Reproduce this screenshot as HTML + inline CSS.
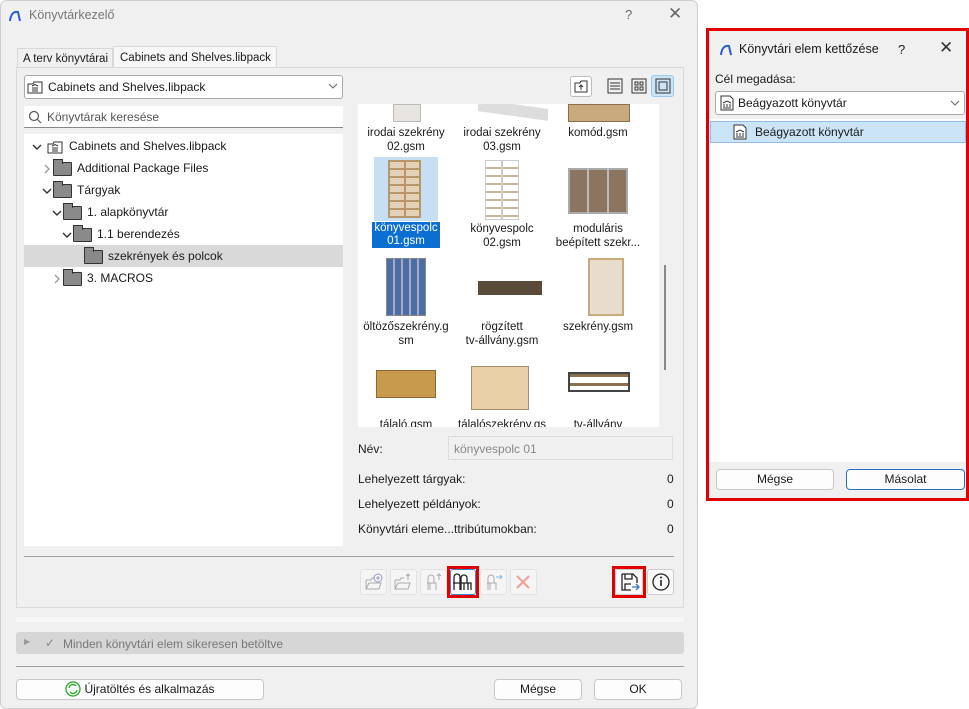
<!DOCTYPE html>
<html><head><meta charset="utf-8"><style>
*{box-sizing:border-box;margin:0;padding:0}
body{width:969px;height:709px;background:#fff;position:relative;overflow:hidden;font-family:"Liberation Sans",sans-serif;font-size:12px;color:#1a1a1a}
.a{position:absolute;white-space:nowrap}
.btn{position:absolute;background:#fdfdfd;border:1px solid #c8c8c8;border-radius:4px;text-align:center;line-height:19px}
.tb{position:absolute;width:27px;height:26px;border:1px solid #e2e2e2;border-radius:3px;background:#f5f5f5}
.fold{display:inline-block;width:19px;height:14px;background:#8a8a8a;border:1px solid #333;border-radius:1px;vertical-align:middle;position:relative;margin-right:5px}
.fold:before{content:"";position:absolute;left:-1px;top:-4px;width:8px;height:4px;background:#8a8a8a;border:1px solid #333;border-bottom:none}
.row{position:absolute;height:22px;line-height:22px;white-space:nowrap}
.chev{display:inline-block;width:12px;vertical-align:middle}
.lbl{position:absolute;width:96px;text-align:center;font-size:11.5px;line-height:14px;white-space:nowrap}
</style></head><body>
<svg width="0" height="0" style="position:absolute"><defs>
<symbol id="dn" viewBox="0 0 10 10"><path d="M1 3l4 4 4-4" fill="none" stroke="#333" stroke-width="1.4"/></symbol>
<symbol id="rt" viewBox="0 0 10 10"><path d="M3 1l4 4-4 4" fill="none" stroke="#999" stroke-width="1.3"/></symbol>
</defs></svg>

<div class="a" style="left:0;top:0;width:698px;height:709px;background:#f0f0f0;border:1px solid #cfcfcf;border-radius:6px"></div>
<svg class="a" style="left:8px;top:9px" width="14" height="14"><path d="M2 12 Q3 2 10 3 L12 12" fill="none" stroke="#2a5bd7" stroke-width="2"/></svg>
<div class="a" style="left:29px;top:8px;color:#777;font-size:12.5px">Könyvtárkezelő</div>
<div class="a" style="left:625px;top:7px;color:#666;font-size:13px">?</div>
<div class="a" style="left:668px;top:4px;color:#666;font-size:17px">✕</div>

<div class="a" style="left:17px;top:48px;width:96px;height:20px;border:1px solid #d8d8d8;border-bottom:none;background:#f0f0f0;padding:4px 5px;font-size:11.5px">A terv könyvtárai</div>
<div class="a" style="left:113px;top:46px;width:164px;height:22px;border:1px solid #d8d8d8;border-bottom:none;background:#f7f7f7;padding:5px 6px;font-size:11.5px">Cabinets and Shelves.libpack</div>
<div class="a" style="left:16px;top:67px;width:668px;height:541px;border:1px solid #dadada;background:#f0f0f0"></div>

<div class="a" style="left:24px;top:75px;width:319px;height:24px;border:1px solid #aaa;border-radius:3px;background:#fff"></div>
<svg class="a" style="left:27px;top:80px" width="16" height="14"><path d="M1 4h5l1-2h8v11H1z" fill="#fff" stroke="#333"/><path d="M5 6l3-1.5 3 1.5M5 11h6M6 7v3M8 7v3M10 7v3" stroke="#333" fill="none"/></svg>
<div class="a" style="left:48px;top:80px">Cabinets and Shelves.libpack</div>
<svg class="a" style="left:328px;top:83px" width="10" height="6"><path d="M1 1l4 4 4-4" fill="none" stroke="#666"/></svg>
<div class="a" style="left:24px;top:106px;width:319px;height:22px;background:#fff;border-bottom:1px solid #888"></div>
<svg class="a" style="left:28px;top:110px" width="14" height="14"><circle cx="6" cy="6" r="4.5" fill="none" stroke="#555" stroke-width="1.2"/><path d="M9.5 9.5l3.5 3.5" stroke="#555" stroke-width="1.2"/></svg>
<div class="a" style="left:47px;top:110px;color:#555">Könyvtárak keresése</div>
<div class="a" style="left:24px;top:134px;width:319px;height:412px;background:#fff"></div>
<div class="a" style="left:24px;top:245px;width:319px;height:22px;background:#d9d9d9"></div>
<div class="row" style="left:31px;top:135px"><svg class="chev" viewBox="0 0 10 10" height="10"><use href="#dn"/></svg><svg width="16" height="14" style="vertical-align:middle;margin:0 6px 0 4px"><path d="M1 4h5l1-2h8v11H1z" fill="#fff" stroke="#333"/><path d="M5 6l3-1.5 3 1.5M5 11h6M6 7v3M8 7v3M10 7v3" stroke="#333" fill="none"/></svg>Cabinets and Shelves.libpack</div>
<div class="row" style="left:41px;top:157px"><svg class="chev" viewBox="0 0 10 10" height="10"><use href="#rt"/></svg><span class="fold"></span>Additional Package Files</div>
<div class="row" style="left:41px;top:179px"><svg class="chev" viewBox="0 0 10 10" height="10"><use href="#dn"/></svg><span class="fold"></span>Tárgyak</div>
<div class="row" style="left:51px;top:201px"><svg class="chev" viewBox="0 0 10 10" height="10"><use href="#dn"/></svg><span class="fold"></span>1. alapkönyvtár</div>
<div class="row" style="left:61px;top:223px"><svg class="chev" viewBox="0 0 10 10" height="10"><use href="#dn"/></svg><span class="fold"></span>1.1 berendezés</div>
<div class="row" style="left:84px;top:245px"><span class="fold"></span>szekrények és polcok</div>
<div class="row" style="left:51px;top:267px"><svg class="chev" viewBox="0 0 10 10" height="10"><use href="#rt"/></svg><span class="fold"></span>3. MACROS</div>

<div class="a" style="left:570px;top:76px;width:22px;height:21px;border:1px solid #bbb;border-radius:3px;background:#fff"></div>
<svg class="a" style="left:574px;top:80px" width="14" height="13"><path d="M1 3h5l1-2h6v11H1z" fill="none" stroke="#333"/><path d="M7 10V5M5 7l2-2 2 2" stroke="#333" fill="none"/></svg>
<svg class="a" style="left:607px;top:78px" width="16" height="16"><rect x="1" y="1" width="14" height="14" fill="none" stroke="#333"/><path d="M3 5h10M3 8h10M3 11h10" stroke="#333"/></svg>
<svg class="a" style="left:631px;top:78px" width="16" height="16"><rect x="1" y="1" width="14" height="14" fill="none" stroke="#333"/><rect x="4" y="4" width="3" height="3" fill="none" stroke="#333"/><rect x="9" y="4" width="3" height="3" fill="none" stroke="#333"/><rect x="4" y="9" width="3" height="3" fill="none" stroke="#333"/><rect x="9" y="9" width="3" height="3" fill="none" stroke="#333"/></svg>
<div class="a" style="left:651px;top:75px;width:23px;height:22px;background:#cce4f7;border:1px solid #9cc8ee;border-radius:3px"></div>
<svg class="a" style="left:655px;top:78px" width="16" height="16"><rect x="1" y="1" width="14" height="14" fill="none" stroke="#333"/><rect x="4" y="4" width="8" height="8" fill="none" stroke="#333"/></svg>

<div class="a" style="left:358px;top:104px;width:301px;height:323px;background:#fff;overflow:hidden">
  <div class="a" style="left:35px;top:0;width:28px;height:18px;background:#e8e4e0;border:1px solid #bbb"></div>
  <div class="a" style="left:120px;top:0;width:70px;height:12px;background:#ddd;transform:skewY(8deg)"></div>
  <div class="a" style="left:210px;top:0;width:62px;height:18px;background:#c9a97e;border:1px solid #8a7050"></div>
  <div class="lbl" style="left:0;top:22px">irodai szekrény<br>02.gsm</div>
  <div class="lbl" style="left:96px;top:22px">irodai szekrény<br>03.gsm</div>
  <div class="lbl" style="left:192px;top:22px">komód.gsm</div>
  <div class="a" style="left:16px;top:53px;width:64px;height:64px;background:#c6dff3"></div>
  <div class="a" style="left:30px;top:56px;width:33px;height:58px;border:2px solid #b8956a;background:repeating-linear-gradient(#e4d2b8 0 6px,#b8956a 6px 8px)"></div>
  <div class="a" style="left:46px;top:56px;width:2px;height:58px;background:#b8956a"></div>
  <div class="a" style="left:14px;top:118px;width:68px;height:26px;background:#0a6fd1;color:#fff;font-size:11.5px;line-height:13px;text-align:center">könyvespolc<br>01.gsm</div>
  <div class="a" style="left:127px;top:56px;width:34px;height:60px;border:1px solid #ccc;background:repeating-linear-gradient(#fff 0 6px,#c8b59a 6px 8px)"></div>
  <div class="a" style="left:143px;top:56px;width:2px;height:60px;background:#ccc"></div>
  <div class="lbl" style="left:96px;top:118px">könyvespolc<br>02.gsm</div>
  <div class="a" style="left:210px;top:64px;width:60px;height:46px;background:#8c7560;border:2px solid #aaa"></div>
  <div class="a" style="left:229px;top:64px;width:2px;height:46px;background:#bbb"></div>
  <div class="a" style="left:249px;top:64px;width:2px;height:46px;background:#bbb"></div>
  <div class="lbl" style="left:192px;top:118px">moduláris<br>beépített szekr...</div>
  <div class="a" style="left:28px;top:154px;width:40px;height:58px;background:repeating-linear-gradient(90deg,#4a6fa8 0 6px,#aab 6px 8px);border:1px solid #888"></div>
  <div class="lbl" style="left:0;top:216px">öltözőszekrény.g<br>sm</div>
  <div class="a" style="left:120px;top:177px;width:64px;height:14px;background:#5a4a38"></div>
  <div class="lbl" style="left:96px;top:216px">rögzített<br>tv-állvány.gsm</div>
  <div class="a" style="left:230px;top:154px;width:36px;height:58px;background:#e8dccb;border:2px solid #c9a97e"></div>
  <div class="lbl" style="left:192px;top:216px">szekrény.gsm</div>
  <div class="a" style="left:18px;top:266px;width:60px;height:28px;background:#c89a4e;border:1px solid #8a6a30"></div>
  <div class="a" style="left:113px;top:262px;width:58px;height:44px;background:#e8cfa6;border:1px solid #a89070"></div>
  <div class="a" style="left:210px;top:268px;width:62px;height:20px;border:2px solid #444;background:repeating-linear-gradient(#8a7050 0 3px,transparent 3px 9px)"></div>
  <div class="lbl" style="left:0;top:314px">tálaló.gsm</div>
  <div class="lbl" style="left:96px;top:314px">tálalószekrény.gs</div>
  <div class="lbl" style="left:192px;top:314px">tv-állvány</div>
</div>
<div class="a" style="left:664px;top:265px;width:2px;height:105px;background:#888"></div>

<div class="a" style="left:358px;top:442px">Név:</div>
<div class="a" style="left:448px;top:436px;width:225px;height:24px;border:1px solid #ddd;background:#f0f0f0;padding:5px 5px;color:#888">könyvespolc 01</div>
<div class="a" style="left:358px;top:472px">Lehelyezett tárgyak:</div><div class="a" style="left:667px;top:472px">0</div>
<div class="a" style="left:358px;top:497px">Lehelyezett példányok:</div><div class="a" style="left:667px;top:497px">0</div>
<div class="a" style="left:358px;top:522px">Könyvtári eleme...ttribútumokban:</div><div class="a" style="left:667px;top:522px">0</div>

<div class="a" style="left:24px;top:556px;width:650px;height:1px;background:#a0a0a0"></div>

<div class="tb" style="left:360px;top:569px"></div>
<div class="tb" style="left:390px;top:569px"></div>
<div class="tb" style="left:420px;top:569px"></div>
<div class="tb" style="left:480px;top:569px"></div>
<div class="tb" style="left:510px;top:569px"></div>
<svg class="a" style="left:364px;top:572px" width="20" height="20"><path d="M2 8h5l1-2h3M2 8v9h13l2-6H5l-3 6" fill="none" stroke="#aaa"/><circle cx="14" cy="6" r="4" fill="none" stroke="#99c"/><path d="M14 4v4M12 6h4" stroke="#99c"/></svg>
<svg class="a" style="left:393px;top:572px" width="20" height="20"><path d="M2 8h5l1-2h3M2 8v9h13l2-6H5l-3 6" fill="none" stroke="#aaa"/><path d="M15 8V2M13 4l2-2 2 2" stroke="#aaa" fill="none"/></svg>
<svg class="a" style="left:424px;top:572px" width="20" height="20"><path d="M4 18V6a3 3 0 0 1 6 0v5H3M4 11h8v7M6 11v7" fill="none" stroke="#aaa"/><path d="M15 8V2M13 4l2-2 2 2" stroke="#aaa" fill="none"/></svg>
<svg class="a" style="left:484px;top:572px" width="20" height="20"><path d="M4 18V6a3 3 0 0 1 6 0v5H3M4 11h8v7M6 11v7" fill="none" stroke="#aaa"/><path d="M12 5h6M16 3l2 2-2 2" stroke="#8bd" fill="none"/></svg>
<svg class="a" style="left:515px;top:574px" width="16" height="16"><path d="M2 2l12 12M14 2L2 14" stroke="#f2a090" stroke-width="2"/></svg>
<div class="a" style="left:447px;top:566px;width:32px;height:32px;border:3px solid #e00000"></div>
<div class="a" style="left:450px;top:569px;width:26px;height:26px;background:#fff;border:1px solid #3a86d8;border-radius:3px"></div>
<svg class="a" style="left:452px;top:572px" width="22" height="20"><path d="M2 18V5a3 3 0 0 1 6 0v6H1M8 11v7" fill="none" stroke="#222" stroke-width="1.3"/><path d="M9 18V6a3 3 0 0 1 6 0v5H8M9 11h10v7M12 11v7M16 11v7" fill="none" stroke="#222" stroke-width="1.3"/></svg>
<div class="a" style="left:612px;top:566px;width:34px;height:32px;border:3px solid #e00000"></div>
<div class="a" style="left:615px;top:569px;width:28px;height:26px;background:#fafafa;border:1px solid #ccc;border-radius:3px"></div>
<svg class="a" style="left:620px;top:572px" width="20" height="20"><path d="M2 2h11l4 4v5M2 2v16h9" fill="none" stroke="#222" stroke-width="1.3"/><path d="M5 2v5h7V2M5 18v-6h6" fill="none" stroke="#222" stroke-width="1.3"/><path d="M12 15h7M16 12l3 3-3 3" fill="none" stroke="#2a7bd6" stroke-width="1.3"/></svg>
<div class="a" style="left:647px;top:569px;width:27px;height:26px;background:#fafafa;border:1px solid #ccc;border-radius:3px"></div>
<svg class="a" style="left:651px;top:572px" width="20" height="20"><circle cx="10" cy="10" r="8" fill="none" stroke="#222" stroke-width="1.3"/><path d="M10 8v6" stroke="#222" stroke-width="1.6"/><circle cx="10" cy="5.5" r="1" fill="#222"/></svg>

<div class="a" style="left:16px;top:617px;width:668px;height:5px;background:#f7f7f7"></div>
<div class="a" style="left:16px;top:632px;width:668px;height:22px;background:#d6d6d6;border-radius:3px"></div>
<div class="a" style="left:24px;top:637px;font-size:8px;color:#999">▶</div>
<div class="a" style="left:45px;top:636px;color:#888">✓</div>
<div class="a" style="left:63px;top:637px;color:#777">Minden könyvtári elem sikeresen betöltve</div>
<div class="a" style="left:16px;top:666px;width:668px;height:1px;background:#a0a0a0"></div>

<div class="btn" style="left:16px;top:679px;width:248px;height:21px"><svg width="16" height="16" style="vertical-align:-4px;margin-right:3px"><circle cx="8" cy="8" r="7" fill="#fff" stroke="#2a2" stroke-width="1.3"/><path d="M4 7a4 4 0 0 1 7-2M12 9a4 4 0 0 1-7 2" fill="none" stroke="#2a2" stroke-width="1.3"/></svg>Újratöltés és alkalmazás</div>
<div class="btn" style="left:494px;top:679px;width:88px;height:21px">Mégse</div>
<div class="btn" style="left:594px;top:679px;width:88px;height:21px">OK</div>

<div class="a" style="left:706px;top:28px;width:263px;height:473px;border:3px solid #e00000;background:#fff"></div>
<div class="a" style="left:709px;top:31px;width:257px;height:88px;background:#f0f0f0"></div>
<div class="a" style="left:709px;top:462px;width:257px;height:36px;background:#f0f0f0"></div>
<svg class="a" style="left:719px;top:43px" width="14" height="14"><path d="M2 12 Q3 2 10 3 L12 12" fill="none" stroke="#2a5bd7" stroke-width="2"/></svg>
<div class="a" style="left:739px;top:42px;font-size:12.5px">Könyvtári elem kettőzése</div>
<div class="a" style="left:898px;top:42px;font-size:13px">?</div>
<div class="a" style="left:939px;top:38px;font-size:17px;color:#333">✕</div>
<div class="a" style="left:715px;top:72px">Cél megadása:</div>
<div class="a" style="left:715px;top:91px;width:250px;height:24px;border:1px solid #aaa;border-radius:3px;background:#fff"></div>
<svg class="a" style="left:720px;top:95px" width="14" height="16"><path d="M1 1h9l3 3v11H1z" fill="#fff" stroke="#333"/><path d="M3 8l4-2 4 2M3 13h8M4 9v3M7 9v3M10 9v3" stroke="#333" fill="none"/></svg>
<div class="a" style="left:738px;top:96px">Beágyazott könyvtár</div>
<svg class="a" style="left:950px;top:100px" width="10" height="6"><path d="M1 1l4 4 4-4" fill="none" stroke="#666"/></svg>
<div class="a" style="left:710px;top:121px;width:256px;height:22px;background:#cce4f7;border:1px solid #8fbde8"></div>
<svg class="a" style="left:733px;top:124px" width="14" height="16"><path d="M1 1h9l3 3v11H1z" fill="#fff" stroke="#333"/><path d="M3 8l4-2 4 2M3 13h8M4 9v3M7 9v3M10 9v3" stroke="#333" fill="none"/></svg>
<div class="a" style="left:755px;top:125px">Beágyazott könyvtár</div>
<div class="btn" style="left:716px;top:469px;width:118px;height:21px">Mégse</div>
<div class="btn" style="left:846px;top:469px;width:119px;height:21px;border-color:#2a6fc0">Másolat</div>
</body></html>
